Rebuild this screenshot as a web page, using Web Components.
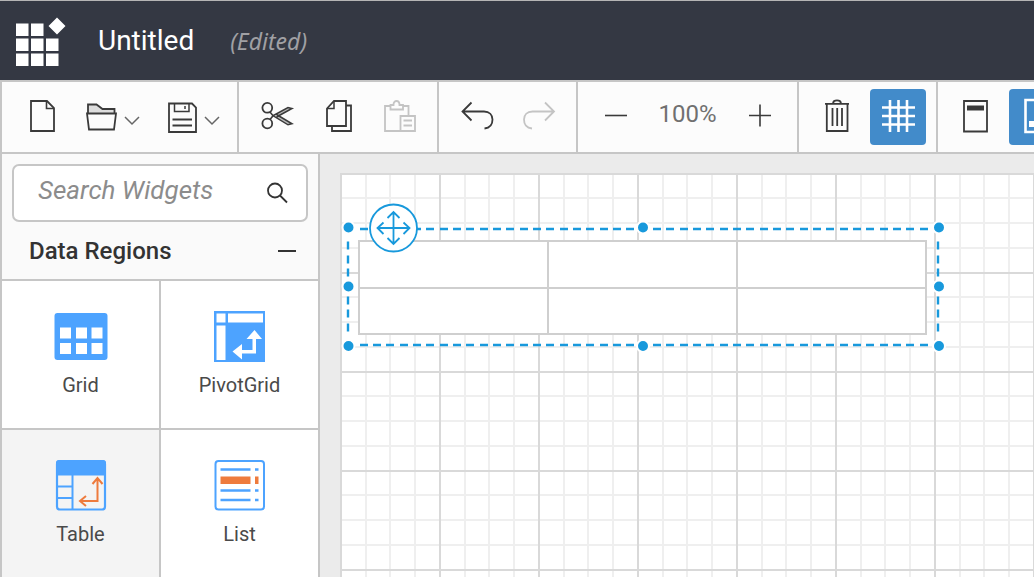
<!DOCTYPE html>
<html lang="en">
<head>
<meta charset="utf-8">
<meta name="viewport" content="width=device-width, initial-scale=1">
<title>Untitled – Report Designer</title>
<style>
  html, body { margin: 0; height: 100%; }
  body {
    font-family: Roboto, "Liberation Sans", sans-serif;
    color: #333;
    overflow: hidden;
    --line: #c6c6c6;
    --accent: #1899dc;
    --active: #428bca;
  }
</style>
</head>
<body>
<designer-app></designer-app>

<script>
const ICONS = {
  file: `<path d="M5 0H21L28 7V30H5Z"/><path d="M20.500 0V7.500H28" stroke-width="1.600"/>`,
  open: `<path d="M2 12V3.500H10.500L16.500 8H28.500V12" fill="#ddd"/><path d="M1 12.500H30L28 28.500H3Z" fill="#fcfcfc"/>`,
  save: `<path d="M3 2.500H26L30 6.500V31H3Z"/><path d="M8.500 2.500V10.500H23V2.500M19 5V8" stroke-width="1.500"/><path d="M6.500 18.500H26M6.500 24.500H26"/>`,
  cut: `<circle cx="6.300" cy="6.800" r="4.900"/><circle cx="6.300" cy="22.500" r="4.900"/><path d="M9 11L12 14.700L27 6.500L31 7.500L15.500 16M9 18.500L12 14.700L27 23.800L31 22.800L15.500 13.500" fill="#bbb" stroke-width="1.500"/>`,
  copy: `<path d="M5 7.500L12 0H24V25H5Z"/><path d="M5 7.500H12V0" stroke-width="1.500"/><path d="M24 4.500H29V30H10V25"/>`,
  paste: `<path d="M7 5H2V30H17M20 5H25.500V14"/><path d="M7.500 8.500V4H10.500C10.500 1 12 0 13.500 0S16.500 1 16.500 4H20V8.500Z"/><path d="M17.500 15H32V30H17.500ZM20.500 19.500H29M20.500 24.500H29"/>`,
  undo: `<path d="M10.500 1.500L1.500 10.500L10.500 19.500M2 10.500H23C28.500 10.500 31.500 14 31.500 18.500C31.500 23.500 28.500 27 23.500 27.500"/>`,
  redo: `<path d="M23 1.500L32 10.500L23 19.500M31.500 10.500H10.500C5 10.500 2 14 2 18.500C2 23.500 5 27 10 27.500"/>`,
  minus: `<path d="M5 14.500H27" stroke-width="1.600"/>`,
  plus: `<path d="M6 14.500H28M17 3.500V25.500" stroke-width="1.600"/>`,
  trash: `<path d="M4 2.800H28M12 2C12.500-1.500 19.500-1.500 20 2M5.800 3V30H26.500V3"/><path d="M11.500 7V25M16.200 7V25M21 7V25"/>`,
  grid: `<path d="M0 6.500H33M0 15H33M0 23.500H33M8 -1V31M16.500 -1V31M25 -1V31" stroke-width="2.600"/>`,
  header: `<path d="M4 0H27V30.500H4Z"/><path d="M7 4.500H24V9.500H7Z" fill="currentColor" stroke="none"/>`,
  footer: `<path d="M4.500 -1H28V31H4.500Z" stroke-width="2.600"/><path d="M8 20H25V26H8Z" fill="currentColor" stroke="none"/>`
};

const WIDGETS = {
  grid: `<rect x="-.5" y="2" width="53" height="47" rx="3" fill="#4da3ff"/><path fill="#fff" d="M5 16.500h11v11H5zM21 16.500h11v11H21zM36.500 16.500h11v11h-11zM5 32h11v11H5zM21 32h11v11H21zM36.500 32h11v11h-11z"/>`,
  pivot: `<rect x="0" width="51" height="51" fill="#4da3ff"/><path fill="#fff" d="M2.500 2.500h9v9h-9zM14 2.500h35v9H14zM2.500 14.500h9v34.500h-9zM40.500 19l7.500 9h-6v14.500H28v6L18.500 40.500l9.500-7.500v6h10.500V28h-6z"/>`,
  table: `<rect x="2" y="1" width="48" height="48.500" rx="3" fill="none" stroke="#4da3ff" stroke-width="2.200"/><path fill="#4da3ff" d="M1 3Q1 0 4 0H48Q51 0 51 3V15.500H1z"/><path d="M17.500 15V49M1 26.500H17M1 38H17" fill="none" stroke="#4da3ff" stroke-width="2"/><path d="M42.500 18V41H25M37.500 24L42.500 18L47.500 24M31 36L25 41L31 46" fill="none" stroke="#ee7b3d" stroke-width="2"/>`,
  list: `<rect x="1.500" y="1" width="48.500" height="48.500" rx="3" fill="none" stroke="#4da3ff" stroke-width="2"/><path d="M6.500 9.500H36.500M41 9.500H44.500M6.500 30.500H36.500M41 30.500H44.500M6.500 40H36.500M41 40H44.500" fill="none" stroke="#4da3ff" stroke-width="2.600"/><path d="M6.500 16.500H36.500V24H6.500ZM41 16.500H44.500V24H41Z" fill="#ee7b3d"/>`
};

function define(name, render) {
  customElements.define(name, class extends HTMLElement {
    constructor() {
      super();
      this.attachShadow({ mode: "open" });
    }
    connectedCallback() {
      this.shadowRoot.innerHTML = render(this);
    }
  });
}

define("designer-app", () => `
  <style>
    :host { display: grid; grid-template-rows: auto auto minmax(0, 1fr); height: 100vh; }
    .main { display: grid; grid-template-columns: 320px minmax(0, 1fr); min-height: 0; }
  </style>
  <app-header><span slot="name">Untitled</span><span slot="state">(Edited)</span></app-header>
  <app-toolbar></app-toolbar>
  <div class="main">
    <widget-panel></widget-panel>
    <design-surface></design-surface>
  </div>`);

define("app-header", () => `
  <style>
    :host { display: block; }
    header {
      display: flex; align-items: center; box-sizing: border-box; height: 80px;
      padding: 0 14px; border-top: 1px solid #b5b5b5; background: #343843; color: #fff;
    }
    svg { width: 52px; height: 52px; margin-right: 32px; fill: #fff; }
    h1 { margin: 0 36px 0 0; font-size: 28px; line-height: 32px; font-weight: 400; }
    .state { font: italic 23px/32px "Noto Sans", sans-serif; color: #a0a0a4; }
  </style>
  <header>
    <svg viewBox="0 0 52 52" aria-hidden="true">
      <path d="M2 8.500h12.500V21H2zM17 8.500h12.500V21H17zM2 23.500h12.500V36H2zM17 23.500h12.500V36H17zM32 23.500h12.500V36H32zM2 38.500h12.500V51H2zM17 38.500h12.500V51H17zM32 38.500h12.500V51H32zM43 2.500l8.500 8.500L43 19.500 34.500 11z"/>
    </svg>
    <h1><slot name="name"></slot></h1>
    <span class="state"><slot name="state"></slot></span>
  </header>`);

define("app-toolbar", () => `
  <style>
    :host {
      display: flex; overflow: hidden; background: #fcfcfc; min-width: 0;
      border: 2px solid var(--line); border-right: 0;
    }
    .zoom { box-sizing: border-box; width: 77px; text-align: center; font-size: 24px; line-height: 50px; color: #707070; }
    .files { --gap: 6px; }
  </style>
  <tool-group class="files">
    <tool-button icon="file" label="New"></tool-button>
    <tool-button icon="open" label="Open" menu></tool-button>
    <tool-button icon="save" label="Save" menu></tool-button>
  </tool-group>
  <tool-group>
    <tool-button icon="cut" label="Cut"></tool-button>
    <tool-button icon="copy" label="Copy"></tool-button>
    <tool-button icon="paste" label="Paste" disabled></tool-button>
  </tool-group>
  <tool-group>
    <tool-button icon="undo" label="Undo"></tool-button>
    <tool-button icon="redo" label="Redo" disabled></tool-button>
  </tool-group>
  <tool-group>
    <tool-button icon="minus" label="Zoom out"></tool-button>
    <span class="zoom">100%</span>
    <tool-button icon="plus" label="Zoom in"></tool-button>
  </tool-group>
  <tool-group>
    <tool-button icon="trash" label="Delete"></tool-button>
    <tool-button icon="grid" label="Show grid" pressed></tool-button>
  </tool-group>
  <tool-group>
    <tool-button icon="header" label="Page header"></tool-button>
    <tool-button icon="footer" label="Page footer" pressed></tool-button>
  </tool-group>`);

define("tool-group", () => `
  <style>
    :host {
      display: flex; flex: none; gap: var(--gap, 5px); box-sizing: border-box; height: 70px;
      padding: 7px 10px; border-right: 2px solid var(--line);
    }
    :host(.files) { padding: 7px 7px 7px 12px; }
  </style>
  <slot></slot>`);

define("tool-button", el => `
  <style>
    :host { display: block; flex: none; }
    button {
      display: flex; align-items: center; gap: 6px; height: 56px; padding: 0 12px;
      border: 0; border-radius: 4px; background: none; color: #3a3a3a;
    }
    :host([menu]) button { padding: 0 10px; }
    :host([pressed]) button { background: var(--active); color: #fff; }
    button:disabled { color: #c4c4c4; }
    svg { display: block; overflow: visible; fill: none; stroke: currentColor; stroke-width: 1.800; }
    .chevron { stroke-width: 1.500; color: #666; }
  </style>
  <button type="button" aria-label="${el.getAttribute("label")}"
    ${el.hasAttribute("disabled") ? "disabled" : ""} ${el.hasAttribute("pressed") ? 'aria-pressed="true"' : ""}>
    <svg width="32" height="32" viewBox="0 0 32 32">${ICONS[el.getAttribute("icon")]}</svg>
    ${el.hasAttribute("menu") ? '<svg class="chevron" width="16" height="16" viewBox="0 0 16 16"><path d="M1 8L8 15L15 8"/></svg>' : ""}
  </button>`);

define("widget-panel", () => `
  <style>
    :host {
      display: block; box-sizing: border-box; overflow: hidden; background: #fafafa;
      border: solid var(--line); border-width: 0 2px;
    }
    .search {
      display: flex; align-items: center; box-sizing: border-box; height: 58px; margin: 10px 10px 0;
      padding: 0 18px 0 24px; border: 2px solid var(--line); border-radius: 7px; background: #fff;
    }
    input {
      flex: 1; min-width: 0; padding: 0 0 6px; border: 0; outline: 0; background: none;
      font: italic 26px/32px Roboto, sans-serif; color: #333;
    }
    input::placeholder { color: #8c8c8c; opacity: 1; }
    .search svg { width: 22px; height: 22px; fill: none; stroke: #333; stroke-width: 1.800; }
    h2 { margin: 0; border-bottom: 2px solid var(--line); }
    h2 button {
      display: flex; align-items: center; justify-content: space-between; width: 100%; height: 57px;
      padding: 0 22px 0 27px; border: 0; background: none;
      font: 500 24px/32px Roboto, sans-serif; color: #333;
    }
    h2 i { width: 18px; height: 2px; background: #333; }
    .tiles { display: grid; grid-template-columns: 1fr 1fr; gap: 2px; background: var(--line); }
  </style>
  <label class="search">
    <input type="text" placeholder="Search Widgets" aria-label="Search Widgets">
    <svg viewBox="0 0 22 22" aria-hidden="true"><circle cx="9" cy="8.500" r="7"/><path d="M14 13.500L21 20.500"/></svg>
  </label>
  <h2><button type="button" aria-expanded="true">Data Regions<i></i></button></h2>
  <div class="tiles">
    <widget-tile icon="grid">Grid</widget-tile>
    <widget-tile icon="pivot">PivotGrid</widget-tile>
    <widget-tile icon="table" selected>Table</widget-tile>
    <widget-tile icon="list">List</widget-tile>
  </div>`);

define("widget-tile", el => `
  <style>
    :host { display: block; }
    button {
      display: flex; flex-direction: column; align-items: center; gap: 6px; box-sizing: border-box;
      width: 100%; height: 147px; padding: 30px 0 0; border: 0; background: #fff;
      font: 400 20px/32px Roboto, sans-serif; color: #4a4a4a;
    }
    :host([selected]) button { background: #f4f4f4; }
    svg { overflow: visible; }
  </style>
  <button type="button">
    <svg width="52" height="52" viewBox="0 0 52 52" aria-hidden="true">${WIDGETS[el.getAttribute("icon")]}</svg>
    <span><slot></slot></span>
  </button>`);

define("design-surface", () => `
  <style>
    :host { display: flex; box-sizing: border-box; padding: 19px 0 0 20px; background: #ebebeb; overflow: hidden; }
    .paper { position: relative; flex: 1; min-width: 0; background: #fff; overflow: hidden; }
    .lines { display: block; width: 100%; height: 100%; }
    report-table { position: absolute; left: 18px; top: 67px; }
    selection-frame { position: absolute; left: 0; top: 46px; }
  </style>
  <div class="paper">
    <svg class="lines" aria-hidden="true">
      <defs>
        <pattern id="cells" width="99" height="99" patternUnits="userSpaceOnUse">
          <path fill="#efefef" d="M25 0h2v99h-2zM49 0h2v99h-2zM74 0h2v99h-2zM0 24h99v2H0zM0 49h99v2H0zM0 74h99v2H0z"/>
          <path fill="#d9d9d9" d="M0 0h2v99H0zM0 0h99v2H0z"/>
        </pattern>
      </defs>
      <rect width="100%" height="100%" fill="url(#cells)"/>
    </svg>
    <report-table></report-table>
    <selection-frame></selection-frame>
  </div>`);

define("report-table", () => `
  <style>
    :host { display: block; width: 569px; }
    table { width: 100%; table-layout: fixed; border-collapse: collapse; background: #fff; }
    td { height: 45px; padding: 0; border: 2px solid #cfcfcf; }
    tr + tr td { height: 44px; }
  </style>
  <table aria-label="Table">
    <tbody><tr><td></td><td></td><td></td></tr><tr><td></td><td></td><td></td></tr></tbody>
  </table>`);

define("selection-frame", () => {
  const spots = [[8.5, 8.5], [303, 8.5], [599, 8.5], [8.5, 67.5], [599, 67.5], [8.5, 127], [303, 127], [599, 127]];
  return `
  <style>
    :host { display: block; pointer-events: none; }
    svg { display: block; overflow: visible; fill: none; stroke: var(--accent); }
    .dash { stroke-width: 2.400; }
    .knob { fill: var(--accent); stroke: #fff; stroke-width: 2; }
  </style>
  <svg width="606" height="134" viewBox="0 0 606 134" aria-hidden="true">
    <path class="dash" stroke-dasharray="8 5 8 5 8 6" d="M20 10H592M20 126H592"/>
    <path class="dash" stroke-dasharray="8 6 8 5 8 6" d="M8 22.500V114M598 22.500V114"/>
    ${spots.map(([x, y]) => `<circle class="knob" cx="${x}" cy="${y}" r="6"/>`).join("")}
    <circle cx="53.500" cy="9" r="23.500" fill="#fff" stroke-width="1.800"/>
    <path stroke-width="1.800" d="M37.500 9H69M53.500 -6.500V25M47.500 -1L53.500 -7L59.500 -1M47.500 19L53.500 25L59.500 19M43.500 3.500L37.500 9L43.500 15M63.500 3.500L69.500 9L63.500 15"/>
  </svg>`;
});
</script>
</body>
</html>
